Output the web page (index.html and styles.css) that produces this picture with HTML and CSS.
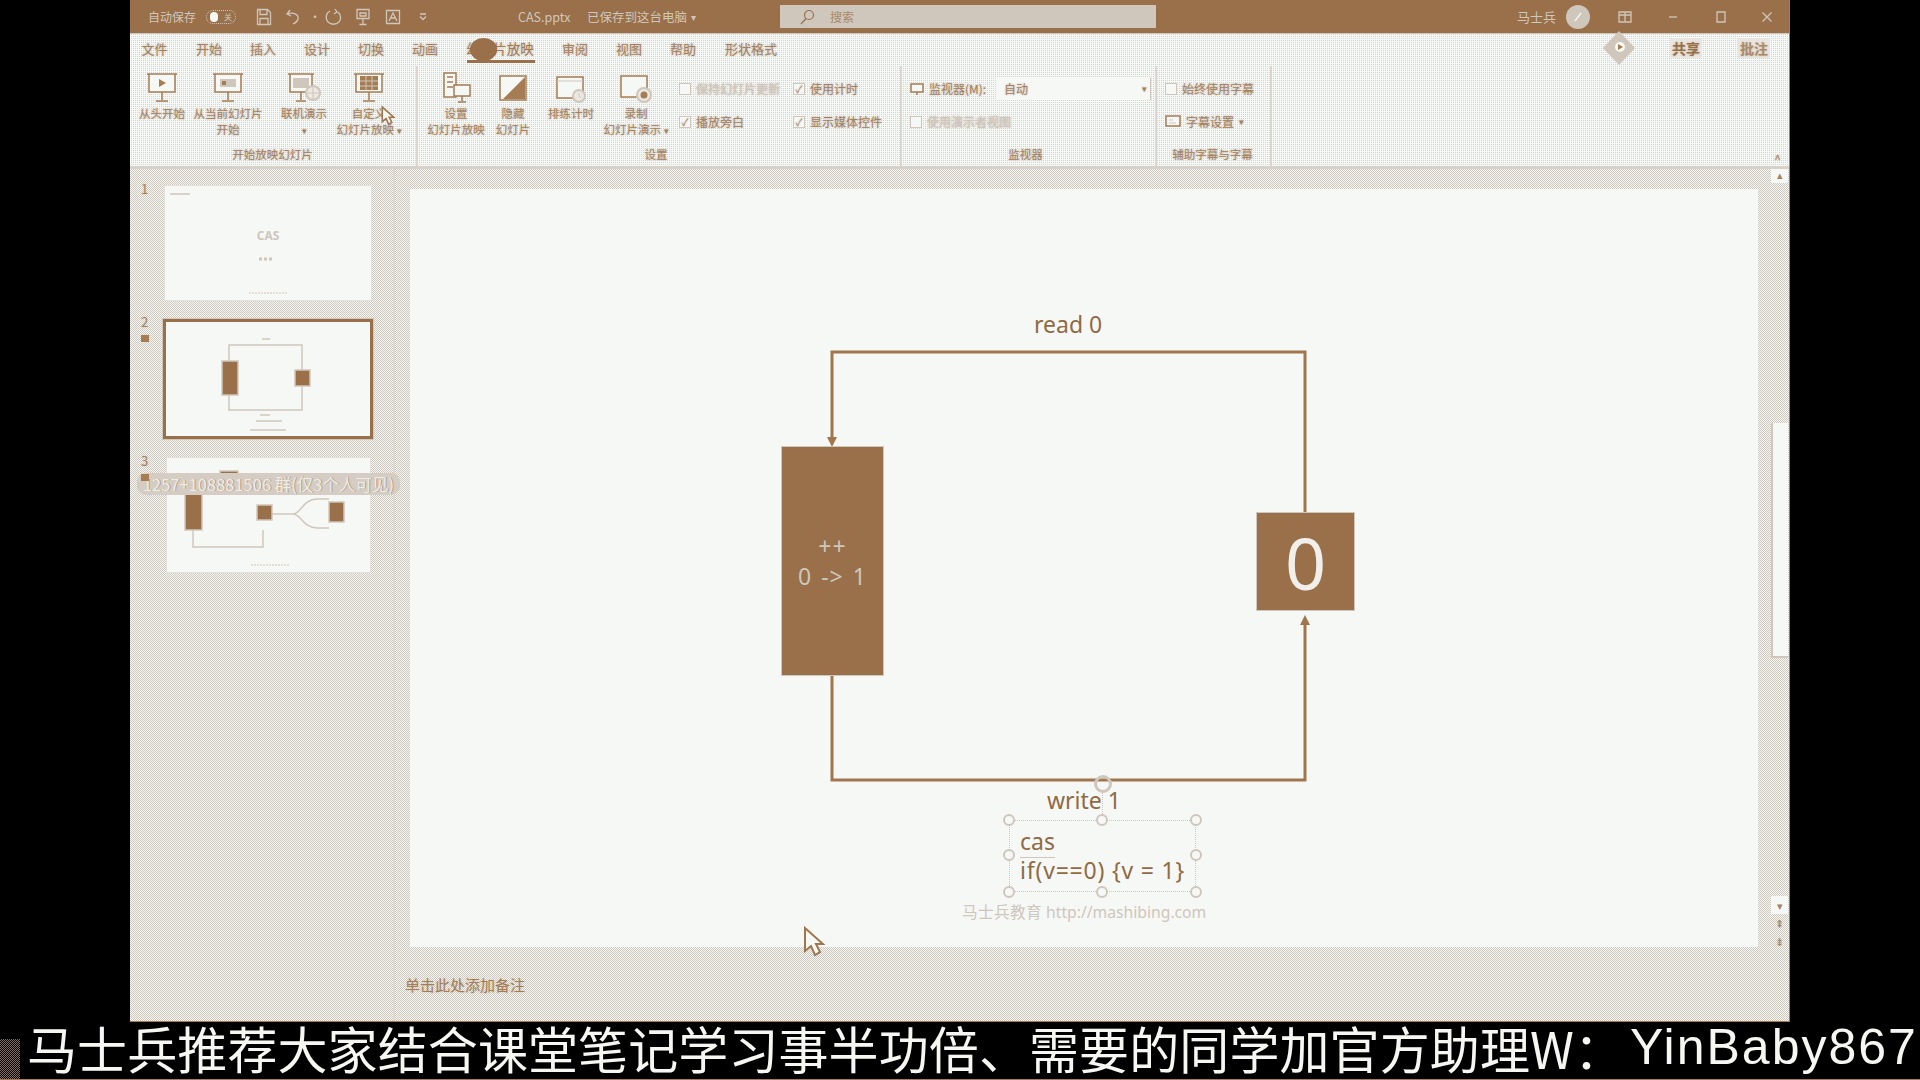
FILE: index.html
```html
<!DOCTYPE html>
<html lang="zh-CN">
<head>
    <meta charset="UTF-8">
    <title>CAS.pptx - PowerPoint</title>
    <link rel="stylesheet" href="styles.css">
</head>
<body>

    <div class="window">

        <!-- title bar -->
        <div class="titlebar">
            <div class="title-left">
                <span class="autosave">自动保存</span>
                <span class="toggle"><i></i><b>关</b></span>
                <span class="qa"><svg width="16" height="18" viewBox="0 0 16 18"><path d="M1.500 1.500h10l3 3v12h-13zM4 1.500v5h7v-5M4 16.500v-6h8v6" class="tb"/></svg></span>
                <span class="qa"><svg width="18" height="16" viewBox="0 0 18 16"><path d="M5 1 2 5l4 2M2.500 5C8 3 14 5 13 10c-.5 2.500-3 4-5 5" class="tb"/></svg></span>
                <span class="qa-caret">·</span>
                <span class="qa"><svg width="18" height="18" viewBox="0 0 18 18"><path d="M6 3C2 5 1 10 4 14c3 3 8 3 11 0 2-3 2-7-1-10M11 1l2 3-3 2" class="tb"/></svg></span>
                <span class="qa"><svg width="16" height="18" viewBox="0 0 16 18"><path d="M2 1.500h12v9H2zM8 10.500V16M4.500 16.500h7M5 5h6v3H5z" class="tb"/></svg></span>
                <span class="qa"><svg width="16" height="16" viewBox="0 0 16 16"><path d="M1.500 1.500h13v13h-13zM4 12l4-8 4 8M5.500 9h5" class="tb"/></svg></span>
                <span class="qa"><svg width="8" height="8" viewBox="0 0 8 8"><path d="M1 1h6M1 3.500l3 3 3-3" class="tb"/></svg></span>
                <span class="filename">CAS.pptx</span>
                <span class="saved">已保存到这台电脑</span>
                <span class="saved-caret">▾</span>
            </div>
            <div class="searchbox">
                <svg width="16" height="16" viewBox="0 0 16 16"><circle cx="10" cy="6" r="4.500" class="sb"/><path d="M7 9.500 2 15" class="sb"/></svg>
                <span>搜索</span>
            </div>
            <div class="title-right">
                <span class="username">马士兵</span>
                <span class="avatar"><svg width="12" height="12" viewBox="0 0 12 12"><path d="M3 10 9 2" class="tb"/></svg></span>
                <span class="winbtn first"><svg width="14" height="12" viewBox="0 0 14 12"><path d="M1 1h12v10H1zM7 1v10M1 4h12" class="tb"/></svg></span>
                <span class="winbtn"><svg width="10" height="10" viewBox="0 0 10 10"><path d="M1 5h8" class="tb"/></svg></span>
                <span class="winbtn"><svg width="12" height="12" viewBox="0 0 12 12"><path d="M2 1h8v10H2z" class="tb"/></svg></span>
                <span class="winbtn winbtn-last"><svg width="12" height="12" viewBox="0 0 12 12"><path d="m1.500 1.500 9 9M10.500 1.500l-9 9" class="tb"/></svg></span>
            </div>
        </div>

        <!-- tabs -->
        <div class="tabs">
            <span class="tab">文件</span>
            <span class="tab">开始</span>
            <span class="tab">插入</span>
            <span class="tab">设计</span>
            <span class="tab">切换</span>
            <span class="tab">动画</span>
            <span class="tab tab-active">幻灯片放映<i class="tab-blob"></i></span>
            <span class="tab">审阅</span>
            <span class="tab">视图</span>
            <span class="tab">帮助</span>
            <span class="tab tab-wide">形状格式</span>
            <div class="share">
                <svg width="36" height="36" viewBox="0 0 36 36"><path d="M18 1 34 18 18 35 2 18z" fill="#cfc6bc"/><circle cx="19" cy="17" r="5" fill="#f6f8f5"/><path d="M17 14v6l5-3z" fill="#a57c53"/></svg>
                <span class="share-btn">共享</span>
                <span class="share-btn note-btn">批注</span>
            </div>
        </div>

        <!-- ribbon -->
        <div class="ribbon">
            <div class="group group-start">
                <div class="group-body">
                    <div class="big-btn b60">
                        <svg width="32" height="32" viewBox="0 0 32 32"><path d="M1 2h30M3 2v18h26V2M16 20v8M10 29h12" class="ic"/><path d="m13 7 7 4-7 4z" class="ic-fill"/></svg>
                        <span>从头开始</span>
                    </div>
                    <div class="big-btn b72">
                        <svg width="32" height="32" viewBox="0 0 32 32"><path d="M1 2h30M3 2v18h26V2M16 20v8M10 29h12" class="ic"/><path d="M8 7h16v8H8z" class="ic-pale"/><path d="M10 9h4v4h-4z" class="ic-fill"/></svg>
                        <span>从当前幻灯片<br>开始</span>
                    </div>
                    <div class="big-btn b64 mleft8">
                        <svg width="34" height="32" viewBox="0 0 34 32"><path d="M1 2h26M3 2v18h22V2M14 20v8M9 29h10" class="ic"/><path d="M6 6h16v10H6z" class="ic-pale"/><circle cx="26" cy="21" r="7" class="ic-globe"/><path d="M19 21h14M26 14v14" class="ic-thin"/></svg>
                        <span>联机演示<br><em>▾</em></span>
                    </div>
                    <div class="big-btn b66">
                        <svg width="32" height="32" viewBox="0 0 32 32"><path d="M1 2h30M3 2v18h26V2M16 20v8M10 29h12" class="ic"/><path d="M7 4h18v14H7z" class="ic-fill"/><path d="M13 4v14M19 4v14M7 9h18M7 14h18" class="ic-thin"/></svg>
                        <span>自定义<br>幻灯片放映 <em>▾</em></span>
                    </div>
                </div>
                <div class="group-label">开始放映幻灯片</div>
            </div>

            <div class="group group-setup">
                <div class="group-body">
                    <div class="big-btn b64">
                        <svg width="32" height="32" viewBox="0 0 32 32"><path d="M4 1h12v24H4zM7 5h6M7 10h6M7 15h6" class="ic"/><path d="M14 13h16v11H14zM22 24v5M18 30h8" class="ic"/></svg>
                        <span>设置<br>幻灯片放映</span>
                    </div>
                    <div class="big-btn b50">
                        <svg width="30" height="30" viewBox="0 0 30 30"><path d="M2 3h26v24H2z" class="ic"/><path d="M27 4v22H5z" class="ic-fill"/></svg>
                        <span>隐藏<br>幻灯片</span>
                    </div>
                    <div class="big-btn b66">
                        <svg width="32" height="32" viewBox="0 0 32 32"><path d="M2 5h26v21H2z" class="ic"/><path d="M2 9h26" class="ic-thin"/><circle cx="24" cy="24" r="6" class="ic-globe"/><path d="M24 21v3l2 2" class="ic-thin"/></svg>
                        <span>排练计时</span>
                    </div>
                    <div class="big-btn b64">
                        <svg width="34" height="32" viewBox="0 0 34 32"><path d="M2 4h26v21H2z" class="ic"/><circle cx="25" cy="23" r="7" class="ic-globe"/><circle cx="25" cy="23" r="3.500" class="ic-fill"/></svg>
                        <span>录制<br>幻灯片演示 <em>▾</em></span>
                    </div>
                    <div class="check-col col-a">
                        <div class="check-row off"><i class="box"></i>保持幻灯片更新</div>
                        <div class="check-row"><i class="box on"></i>播放旁白</div>
                    </div>
                    <div class="check-col">
                        <div class="check-row"><i class="box on"></i>使用计时</div>
                        <div class="check-row"><i class="box on"></i>显示媒体控件</div>
                    </div>
                </div>
                <div class="group-label">设置</div>
            </div>

            <div class="group group-monitor">
                <div class="group-body">
                    <div class="check-col">
                        <div class="check-row">
                            <svg class="row-ic" width="14" height="14" viewBox="0 0 14 14"><path d="M1 2h12v8H1zM7 10v3" class="ic"/></svg>
                            <span class="monitor-label">监视器(M):</span>
                            <span class="select">自动<em>▾</em></span>
                        </div>
                        <div class="check-row off"><i class="box"></i>使用演示者视图</div>
                    </div>
                </div>
                <div class="group-label">监视器</div>
            </div>

            <div class="group group-caption">
                <div class="group-body">
                    <div class="check-col">
                        <div class="check-row"><i class="box"></i>始终使用字幕</div>
                        <div class="check-row">
                            <svg class="row-ic" width="16" height="14" viewBox="0 0 16 14"><path d="M1 1h14v10H1z" class="ic"/><path d="M4 5h4M4 8h7" class="ic-thin"/></svg>
                            字幕设置 <em>▾</em>
                        </div>
                    </div>
                </div>
                <div class="group-label">辅助字幕与字幕</div>
            </div>
            <span class="collapse">^</span>
        </div>

        <!-- main -->
        <div class="main">
            <div class="thumbs">
                <div class="thumb-row first">
                    <span class="num">1</span>
                    <div class="thumb">
                        <svg width="206" height="114" viewBox="0 0 206 114">
                            <path d="M5 8h20" class="t-pale"/>
                            <text x="103" y="54" text-anchor="middle" class="t-title">CAS</text>
                            <path d="M94 73h14" class="t-pale t-dots"/>
                            <path d="M84 107h38" class="t-pale t-thin"/>
                        </svg>
                    </div>
                </div>
                <div class="thumb-row">
                    <span class="num">2<i class="star"></i></span>
                    <div class="thumb thumb-current">
                        <svg width="204" height="114" viewBox="0 0 204 114">
                            <path d="M63 39V23h73v26M63 73v15h73V64" class="t-pale"/>
                            <rect x="56" y="39" width="16" height="34" class="t-box"/>
                            <rect x="129" y="48" width="15" height="16" class="t-box"/>
                            <path d="M96 17h8M94 93h10M90 99h26M84 108h36" class="t-pale"/>
                        </svg>
                    </div>
                </div>
                <div class="thumb-row">
                    <span class="num num-over">3<i class="star"></i></span>
                    <div class="thumb thumb-third">
                        <svg width="203" height="114" viewBox="0 0 203 114">
                            <rect x="53" y="13" width="18" height="8" class="t-box"/>
                            <rect x="18" y="36" width="17" height="36" class="t-box"/>
                            <path d="M26 72v17h70V72M96 36V20M104 56h22c8 0 10-15 24-15h12M126 56c8 0 10 14 24 14h12" class="t-pale"/>
                            <rect x="90" y="47" width="15" height="15" class="t-box"/>
                            <rect x="162" y="44" width="15" height="20" class="t-box"/>
                            <path d="M84 107h38" class="t-pale t-thin"/>
                        </svg>
                    </div>
                    <div class="qq-pill">1257+108881506 群(仅3个人可见)</div>
                </div>
            </div>

            <div class="editor">
                <div class="slide">
                    <svg class="wires" width="1348" height="758" viewBox="0 0 1348 758">
                        <path d="M422 250V163H895V323" class="wire"/>
                        <path d="M422 487V591H895V432" class="wire"/>
                        <path d="M417 248h10l-5 10z" class="arrow"/>
                        <path d="M890 436h10l-5-10z" class="arrow"/>
                    </svg>

                    <div class="label label-read">read 0</div>
                    <div class="node node-tall">
                        <span>++</span>
                        <span>0 -&gt; 1</span>
                    </div>
                    <div class="node node-value">0</div>
                    <div class="label label-write">write 1</div>

                    <div class="textbox">
                        <span class="cas-word">cas</span><br>
                        <span class="cas-line">if(v==0) {v = 1}</span>
                        <i class="handle h-tl"></i><i class="handle h-tc"></i><i class="handle h-tr"></i>
                        <i class="handle h-ml"></i><i class="handle h-mr"></i>
                        <i class="handle h-bl"></i><i class="handle h-bc"></i><i class="handle h-br"></i>
                    </div>
                    <div class="rotate"></div>
                    <div class="brand">马士兵教育 http://mashibing.com</div>
                </div>
                <div class="notes">单击此处添加备注</div>
            </div>

            <div class="scrollbar">
                <span class="sb-arrow sb-up">▴</span>
                <div class="sb-track"></div>
                <div class="sb-thumb"></div>
                <div class="sb-track sb-track-low"></div>
                <span class="sb-arrow">▾</span>
                <span class="sb-arrow sb-page">⇞</span>
                <span class="sb-arrow sb-page">⇟</span>
            </div>

            <svg class="cursor cursor-main" width="22" height="32" viewBox="0 0 22 32"><path d="M2 2v23l6-5 4 9 5-3-4-8h7z" fill="#f6f8f5" stroke="#a0764e" stroke-width="2"/></svg>
        </div>

        <svg class="cursor cursor-ribbon" width="14" height="22" viewBox="0 0 22 32"><path d="M2 2v23l6-5 4 9 5-3-4-8h7z" fill="#f6f8f5" stroke="#a0764e" stroke-width="2.500"/></svg>
    </div>

    <div class="subtitle">
        <i class="sub-speck"></i>
        <span class="sub-cjk">马士兵推荐大家结合课堂笔记学习事半功倍、需要的同学加官方助理W：</span><span class="sub-latin">YinBaby867</span>
    </div>

</body>
</html>
```

FILE: styles.css
```css
:root {
    --brown: #99704a;
    --ink: #a5825f;
    --pale: #cfc6bc;
    --paper: #f6f8f5;
}

html, body {
    margin: 0;
    height: 100%;
}

body {
    width: 1920px;
    height: 1080px;
    overflow: hidden;
    background-color: #000;
    font-family: "Noto Sans CJK SC", "Noto Sans", sans-serif;
    color: var(--ink);
}

.window {
    position: relative;
    width: 1660px;
    height: 1022px;
    margin-left: 130px;
    box-sizing: border-box;
    border-right: 1px solid #a57c53;
    border-bottom: 1px solid #a57c53;
    display: flex;
    flex-direction: column;
    background-color: var(--paper);
}

/* title bar */
.titlebar {
    height: 33px;
    flex: none;
    display: flex;
    align-items: center;
    background-color: var(--brown);
    color: var(--pale);
    font-size: 12px;
    border-bottom: 1px solid var(--pale);
}

.title-left {
    width: 650px;
    flex: none;
    display: flex;
    align-items: center;
    padding-left: 18px;
    box-sizing: border-box;
}

.autosave {
    width: 58px;
}

.toggle {
    width: 30px;
    height: 14px;
    box-sizing: border-box;
    border: 1px dotted var(--pale);
    border-radius: 7px;
    display: flex;
    align-items: center;
    justify-content: space-between;
    padding: 0 3px;
    margin-right: 13px;
    font-size: 8px;
}

.toggle i {
    width: 8px;
    height: 10px;
    border-radius: 4px;
    background-color: var(--paper);
}

.toggle b {
    font-weight: normal;
}

.qa {
    width: 30px;
    display: flex;
    justify-content: center;
}

.qa-caret {
    width: 9px;
}

.tb {
    fill: none;
    stroke: var(--pale);
    stroke-width: 1.300;
}

.filename {
    margin-left: 80px;
    width: 69px;
    font-size: 12.500px;
}

.saved {
    width: 104px;
    font-size: 12.500px;
}

.saved-caret {
    font-size: 10px;
}

.searchbox {
    width: 376px;
    height: 23px;
    flex: none;
    display: flex;
    align-items: center;
    box-sizing: border-box;
    padding-left: 19px;
    gap: 15px;
    background-color: var(--pale);
    color: #a98a6a;
}

.sb {
    fill: none;
    stroke: var(--brown);
    stroke-width: 1.200;
}

.title-right {
    flex: 1;
    display: flex;
    align-items: center;
    justify-content: flex-end;
}

.username {
    font-size: 13px;
}

.avatar {
    width: 24px;
    height: 24px;
    margin: 0 11px 0 10px;
    border-radius: 50%;
    background-color: var(--pale);
    display: flex;
    align-items: center;
    justify-content: center;
}

.avatar .tb {
    stroke: #f6f8f5;
}

.winbtn {
    width: 48px;
    display: flex;
    justify-content: center;
}

.winbtn-last {
    width: 44px;
}

/* tabs */
.tabs {
    height: 32px;
    flex: none;
    display: flex;
    align-items: center;
    box-sizing: border-box;
    padding-bottom: 4px;
    font-size: 13px;
    background-color: var(--paper);
    background-image: repeating-conic-gradient(#d9d2c9 0 25%, transparent 0 100%);
    background-size: 2px 2px;
    text-shadow: 0 0 2px var(--pale), 0 0 2px var(--pale);
}

.tab {
    position: relative;
    width: 54px;
    text-align: center;
    font-size: 13px;
}

.tab:first-child {
    width: 49px;
    margin-right: 3px;
}

.tab-active {
    width: 96px;
    height: 32px;
    align-self: flex-start;
    line-height: 28px;
    font-size: 13.500px;
    color: #a57c53;
}

.tab-active::after {
    content: "";
    position: absolute;
    left: 15px;
    right: 13px;
    bottom: 3px;
    height: 3px;
    background-color: var(--brown);
}

.tab-blob {
    position: absolute;
    left: 18px;
    top: 4px;
    width: 27px;
    height: 23px;
    border-radius: 50%;
    background-color: var(--brown);
}

.tab-wide {
    width: 80px;
    margin-left: 1px;
}

.share {
    margin-left: auto;
    display: flex;
    align-items: center;
    margin-right: 19px;
    height: 28px;
}

.share svg {
    margin-right: 33px;
}

.share-btn {
    font-size: 14px;
    font-weight: bold;
    background-color: #e9e6e1;
    padding: 0 2px;
    color: #99704a;
}

.note-btn {
    margin-left: 36px;
    color: #a98a6a;
}

/* ribbon */
.ribbon {
    position: relative;
    height: 100px;
    flex: none;
    display: flex;
    font-size: 12px;
    background-color: var(--paper);
    background-image: repeating-conic-gradient(#d9d2c9 0 25%, transparent 0 100%);
    background-size: 2px 2px;
    border-bottom: 3px solid #d8d1c8;
    box-sizing: content-box;
    text-shadow: 0 0 2px var(--pale), 0 0 2px var(--pale);
}

.ribbon em {
    font-style: normal;
    font-size: 9px;
}

.group {
    display: flex;
    flex-direction: column;
    box-sizing: border-box;
    border-right: 2px solid #dcd6ce;
}

.group-start { width: 288px; padding-left: 2px; }
.group-setup { width: 484px; padding-left: 6px; }
.group-monitor { width: 255px; padding-left: 8px; }
.group-caption { width: 115px; padding-left: 8px; }

.group-body {
    flex: 1;
    display: flex;
}

.group-label {
    height: 21px;
    line-height: 18px;
    text-align: center;
    font-size: 11.500px;
}

.group-start .group-label { padding-right: 3px; }
.group-setup .group-label { padding-right: 12px; }
.group-monitor .group-label { padding-right: 14px; }
.group-caption .group-label { padding-right: 10px; }

.big-btn {
    display: flex;
    flex-direction: column;
    align-items: center;
    padding-top: 6px;
    text-align: center;
    line-height: 16px;
    font-size: 11.500px;
    white-space: nowrap;
}

.big-btn svg {
    height: 32px;
    margin-bottom: 1px;
}

.b50 { width: 50px; }
.b60 { width: 60px; }
.b64 { width: 64px; }
.b66 { width: 66px; }
.b72 { width: 72px; }
.mleft8 { margin-left: 8px; }

.ic {
    fill: #f6f8f5;
    stroke: #a57c53;
    stroke-width: 1.500;
}

.ic-pale {
    fill: var(--pale);
}

.ic-fill {
    fill: #a57c53;
}

.ic-globe {
    fill: #ebe7e1;
    stroke: var(--pale);
    stroke-width: 2;
}

.ic-thin {
    fill: none;
    stroke: var(--pale);
    stroke-width: 1;
}

.check-col {
    display: flex;
    flex-direction: column;
    margin-top: 6px;
}

.col-a {
    margin-left: 11px;
    width: 114px;
}

.check-row {
    height: 33px;
    display: flex;
    align-items: center;
    gap: 5px;
    font-size: 12px;
    white-space: nowrap;
}

.check-row.off {
    color: var(--pale);
}

.box {
    width: 10px;
    height: 10px;
    border: 1px solid var(--pale);
    background-color: var(--paper);
    display: flex;
    align-items: center;
    justify-content: center;
    font-style: normal;
    font-size: 10px;
    line-height: 1;
}

.box.on::after {
    content: "✓";
}

.row-ic {
    flex: none;
}

.monitor-label {
    width: 62px;
}

.select {
    width: 155px;
    height: 22px;
    box-sizing: border-box;
    padding: 0 3px 0 8px;
    display: flex;
    align-items: center;
    justify-content: space-between;
    background-color: var(--paper);
    border-right: 1px solid var(--pale);
}

.collapse {
    position: absolute;
    right: 8px;
    bottom: 0;
    font-size: 12px;
    line-height: 14px;
}

/* main area */
.main {
    position: relative;
    flex: 1;
    min-height: 0;
    display: flex;
    background-color: var(--paper);
    background-image: repeating-conic-gradient(var(--pale) 0 25%, transparent 0 50%);
    background-size: 2px 2px;
}

.thumbs {
    width: 265px;
    flex: none;
    padding-top: 17px;
    border-right: 2px solid #ddd8d0;
    box-sizing: border-box;
}

.thumb-row {
    position: relative;
    display: flex;
    padding-left: 9px;
    margin-bottom: 19px;
}

.num {
    width: 24px;
    flex: none;
    padding-left: 2px;
    margin-top: -5px;
    font-size: 13px;
    line-height: 16px;
    text-shadow: 0 0 2px var(--pale);
    display: flex;
    flex-direction: column;
}

.num-over {
    position: relative;
    z-index: 1;
}

.star {
    width: 8px;
    height: 7px;
    margin-top: 5px;
    background-color: #a57c53;
}

.thumb {
    width: 206px;
    height: 114px;
    background-color: var(--paper);
    box-shadow: 0 0 0 1px #e4e0da;
}

.thumb svg {
    display: block;
}

.thumb-current {
    width: 204px;
    height: 114px;
    margin-left: -2px;
    border: 3px solid var(--brown);
    box-shadow: 0 0 0 1px var(--pale);
}

.thumb-third {
    width: 203px;
    margin-left: 2px;
}

.t-pale {
    fill: none;
    stroke: var(--pale);
    stroke-width: 1.500;
}

.t-thin {
    stroke-width: 1;
    stroke-dasharray: 2 1;
}

.t-dots {
    stroke-width: 3;
    stroke-dasharray: 3 2;
}

.t-title {
    font-family: "Noto Sans", sans-serif;
    font-size: 12px;
    font-weight: bold;
    fill: var(--pale);
}

.t-box {
    fill: var(--brown);
    stroke: var(--pale);
    stroke-width: 1.500;
}

.qq-pill {
    position: absolute;
    left: 7px;
    top: 15px;
    width: 263px;
    height: 22px;
    line-height: 22px;
    border-radius: 9px;
    text-align: center;
    white-space: nowrap;
    font-size: 16.500px;
    background-color: #d5cdc3;
    color: #efece7;
    text-shadow: 1px 0 0 #b39a80;
}

/* slide */
.editor {
    flex: 1;
    min-width: 0;
    padding: 20px 0 0 15px;
    box-sizing: border-box;
}

.slide {
    position: relative;
    width: 1348px;
    height: 758px;
    background-color: var(--paper);
    font-family: "Noto Sans", sans-serif;
    font-size: 23px;
}

.wires {
    position: absolute;
    left: 0;
    top: 0;
}

.wire {
    fill: none;
    stroke: #a0764e;
    stroke-width: 3;
}

.arrow {
    fill: #a0764e;
}

.node {
    position: absolute;
    box-sizing: border-box;
    background-color: var(--brown);
    border: 1px solid var(--pale);
    color: var(--pale);
    display: flex;
    flex-direction: column;
    align-items: center;
    justify-content: center;
}

.node-tall {
    left: 371px;
    top: 257px;
    width: 103px;
    height: 230px;
    line-height: 30px;
    letter-spacing: 1px;
    word-spacing: 2px;
}

.node-value {
    left: 846px;
    top: 323px;
    width: 99px;
    height: 99px;
    font-size: 72px;
    color: #f1efeb;
}

.label {
    position: absolute;
    color: #8f6a45;
    white-space: nowrap;
    line-height: 28px;
}

.label-read {
    left: 624px;
    top: 121px;
}

.label-write {
    left: 637px;
    top: 597px;
}

.textbox {
    position: absolute;
    left: 599px;
    top: 631px;
    width: 187px;
    height: 72px;
    box-sizing: border-box;
    padding: 6px 0 0 10px;
    border: 1px dotted var(--pale);
    line-height: 29px;
    font-size: 23px;
    color: #8f6a45;
    white-space: nowrap;
}

.cas-word {
    border-bottom: 1px solid var(--pale);
}

.cas-line {
    letter-spacing: .8px;
}

.handle {
    position: absolute;
    width: 8px;
    height: 8px;
    border: 2px solid var(--pale);
    border-radius: 50%;
    background-color: var(--paper);
}

.h-tl, .h-tc, .h-tr { top: -7px; }
.h-ml, .h-mr { top: 28px; }
.h-bl, .h-bc, .h-br { bottom: -7px; }
.h-tl, .h-ml, .h-bl { left: -7px; }
.h-tc, .h-bc { left: 86px; }
.h-tr, .h-mr, .h-br { right: -7px; }

.rotate {
    position: absolute;
    left: 684px;
    top: 586px;
    width: 12px;
    height: 12px;
    border: 3px solid var(--pale);
    border-radius: 50%;
}

.rotate::after {
    content: "";
    position: absolute;
    left: 5px;
    top: 14px;
    height: 24px;
    border-left: 1px dotted var(--pale);
}

.brand {
    position: absolute;
    left: 552px;
    top: 712px;
    line-height: 22px;
    font-size: 15.700px;
    color: var(--pale);
    white-space: nowrap;
}

.notes {
    margin: 26px 0 0 -5px;
    font-size: 15px;
    line-height: 24px;
    color: #a57c53;
    text-shadow: 0 0 2px var(--pale);
}

/* scrollbar */
.scrollbar {
    width: 17px;
    flex: none;
    margin-right: 1px;
    display: flex;
    flex-direction: column;
    align-items: center;
    font-size: 11px;
}

.sb-arrow {
    width: 100%;
    height: 18px;
    line-height: 18px;
    text-align: center;
    background-color: var(--paper);
}

.sb-up {
    height: 14px;
    line-height: 10px;
}

.sb-page {
    background-color: transparent;
}

.sb-track {
    width: 100%;
    height: 240px;
}

.sb-thumb {
    width: 100%;
    height: 235px;
    flex: none;
    box-sizing: border-box;
    background-color: var(--paper);
    border-left: 2px solid var(--pale);
    border-bottom: 2px solid var(--pale);
}

.sb-track-low {
    height: 238px;
}

.cursor {
    position: absolute;
}

.cursor-main {
    left: 673px;
    top: 757px;
}

.cursor-ribbon {
    left: 251px;
    top: 105px;
}

/* subtitle */
.subtitle {
    position: relative;
    display: flex;
    height: 58px;
    box-sizing: border-box;
    padding-left: 27px;
    font-size: 50px;
    color: #f6f6f3;
    white-space: nowrap;
    border-bottom: 1px solid #a57c53;
}

.sub-cjk,
.sub-latin {
    display: block;
    height: 50px;
    line-height: 50px;
}

.sub-cjk {
    letter-spacing: .1px;
}

.sub-latin {
    margin-left: 6px;
    font-family: "Liberation Sans", "Noto Sans", sans-serif;
    letter-spacing: 2px;
}

.sub-speck {
    position: absolute;
    left: 0;
    bottom: 0;
    width: 20px;
    height: 40px;
    background-image: repeating-conic-gradient(#8a6c4e 0 25%, transparent 0 50%);
    background-size: 2px 2px;
}
```
